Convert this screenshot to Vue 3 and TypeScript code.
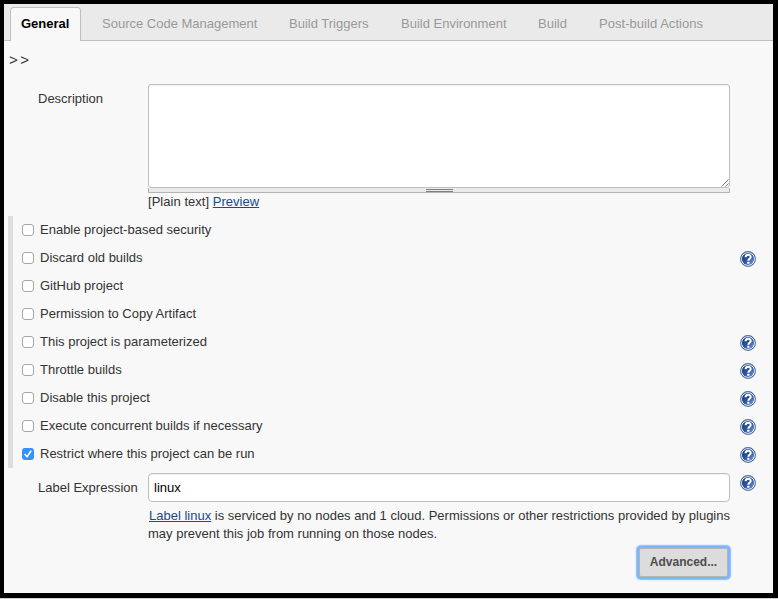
<script setup lang="ts">
import { ref } from 'vue'

interface Tab { label: string; cls: string }
interface Option { label: string; checked: boolean; help: boolean }

const tabs: Tab[] = [
  { label: 'General', cls: 'general' },
  { label: 'Source Code Management', cls: 'scm' },
  { label: 'Build Triggers', cls: 'triggers' },
  { label: 'Build Environment', cls: 'environment' },
  { label: 'Build', cls: 'build' },
  { label: 'Post-build Actions', cls: 'post' },
]
const active = ref('General')

const options = ref<Option[]>([
  { label: 'Enable project-based security', checked: false, help: false },
  { label: 'Discard old builds', checked: false, help: true },
  { label: 'GitHub project', checked: false, help: false },
  { label: 'Permission to Copy Artifact', checked: false, help: false },
  { label: 'This project is parameterized', checked: false, help: true },
  { label: 'Throttle builds', checked: false, help: true },
  { label: 'Disable this project', checked: false, help: true },
  { label: 'Execute concurrent builds if necessary', checked: false, help: true },
  { label: 'Restrict where this project can be run', checked: true, help: true },
])
const description = ref('')
const expression = ref('linux')
</script>

<template>
  <div class="frame">
    <svg class="defs" width="0" height="0" aria-hidden="true">
      <defs>
        <linearGradient id="helpFill" x1="0" y1="0" x2="1" y2="1">
          <stop offset="0" stop-color="#17386f" />
          <stop offset="0.5" stop-color="#2c559a" />
          <stop offset="1" stop-color="#7ba3d6" />
        </linearGradient>
        <symbol id="help" viewBox="0 0 16 16">
          <circle cx="8" cy="8" r="7.4" fill="#fff" stroke="#4c6ca2" stroke-width="1.1" />
          <circle cx="8" cy="8" r="6.1" fill="url(#helpFill)" />
          <path d="M5.6 6.2C5.6 2.9 10.7 2.9 10.7 5.9C10.7 7.8 8.3 7.7 8.3 9.8" fill="none" stroke="#fff" stroke-width="2" />
          <rect x="7.2" y="10.7" width="2.2" height="2" rx="0.5" fill="#fff" />
        </symbol>
      </defs>
    </svg>

    <main class="config">
      <nav class="tabs">
        <a v-for="t in tabs" :key="t.label" class="tab" :class="[t.cls, { active: active === t.label }]" @click="active = t.label">{{ t.label }}</a>
      </nav>

      <div class="crumb">&gt;&gt;</div>

      <section class="field description">
        <label class="name desc-name">Description</label>
        <div class="setting">
          <div class="area">
            <textarea v-model="description"></textarea>
            <svg class="resize" width="8" height="8" viewBox="0 0 8 8"><path d="M0.5 7.5L7.5 0.5M4.5 7.5L7.5 4.5" fill="none" stroke="#555" stroke-width="0.8" /></svg>
          </div>
          <div class="handle"><i class="grip"></i></div>
          <div class="preview"><span class="plain">[Plain text]</span> <a class="link">Preview</a></div>
        </div>
      </section>

      <section class="options">
        <div v-for="o in options" :key="o.label" class="option">
          <label class="check">
            <input v-model="o.checked" type="checkbox" />
            <span class="box" :class="{ on: o.checked }">
              <svg v-if="o.checked" width="12" height="12" viewBox="0 0 12 12"><path d="M3.1 6.4L5.1 8.7L8.8 3.2" fill="none" stroke="#fff" stroke-width="1.6" stroke-linecap="round" stroke-linejoin="round" /></svg>
            </span>
            <span class="text">{{ o.label }}</span>
          </label>
          <svg v-if="o.help" class="help" width="16" height="16"><use href="#help" /></svg>
        </div>
      </section>

      <section class="field expression">
        <label class="name expr-name">Label Expression</label>
        <input v-model="expression" class="entry" type="text" />
        <svg class="help" width="16" height="16"><use href="#help" /></svg>
      </section>

      <div class="message">
        <div><span class="line1"><a class="link">Label linux</a> is serviced by no nodes and 1 cloud. Permissions or other restrictions provided by plugins</span></div>
        <div><span class="line2">may prevent this job from running on those nodes.</span></div>
      </div>

      <div class="actions"><button class="advanced" type="button">Advanced...</button></div>
    </main>
  </div>
</template>

<style>
body { margin: 0; }
</style>

<style scoped>
.frame {
  box-sizing: border-box;
  width: 778px;
  height: 599px;
  padding: 4px 5px 5px 4px;
  background: #000;
  border-bottom: 1px solid #d0d0d0;
  font-family: "Liberation Sans", Arial, sans-serif;
  font-size: 13px;
  line-height: 18px;
  color: #333;
  overflow: hidden;
}
.defs { display: block; width: 0; height: 0; }
.config { height: 589px; background: #f8f8f8; overflow: hidden; white-space: nowrap; }
.tabs {
  box-sizing: border-box;
  display: flex;
  height: 37px;
  padding: 3px 0 0 6px;
  background: #eaeaea;
  border-bottom: 1px solid #bfbfbf;
}
.tab {
  box-sizing: border-box;
  height: 33px;
  padding: 7px 10px 0;
  border: 1px solid transparent;
  border-bottom: 0;
  color: #999;
  margin-right: 10px;
  cursor: pointer;
}
.tab.active {
  height: 34px;
  background: #f8f8f8;
  border-color: #bfbfbf;
  border-radius: 4px 4px 0 0;
  color: #000;
  font-weight: bold;
}
.general { width: 71px; }
.scm { width: 177px; }
.triggers { width: 102px; }
.environment { width: 127px; }
.build { width: 51px; }
.post { letter-spacing: 0.04px; }
.crumb { height: 43px; padding: 9px 0 0 5px; box-sizing: border-box; font-size: 15px; letter-spacing: 2.6px; line-height: 20px; }
.field { display: flex; }
.name { width: 110px; margin-left: 34px; flex: none; }
.desc-name { padding-top: 6px; }
.setting { width: 582px; }
.area { position: relative; height: 104px; }
.area textarea {
  display: block;
  box-sizing: border-box;
  width: 582px;
  height: 104px;
  border: 1px solid #bfbfbf;
  border-radius: 3px;
  background: #fff;
  resize: none;
  outline: none;
  box-shadow: inset 0 1px 1px rgba(0, 0, 0, 0.06);
}
.resize { position: absolute; right: 1px; bottom: 1px; }
.handle {
  box-sizing: border-box;
  height: 5px;
  background: #eaeaea;
  border: solid #b3b5ae;
  border-width: 0 1px 1px;
  display: flex;
  justify-content: center;
  padding: 1px 0 0;
}
.grip { box-sizing: border-box; width: 27px; height: 3px; border: solid #7d7f7c; border-width: 1px 0; }
.preview { height: 23px; }
.plain { letter-spacing: 0.04px; }
.link { color: #204a87; text-decoration: underline; }
.options { margin-left: 4px; width: 759px; border-left: 5px solid #ddd; box-sizing: border-box; }
.option { height: 28px; display: flex; justify-content: space-between; }
.check { display: flex; align-items: flex-start; padding: 8px 0 0 9px; }
.check input { position: absolute; opacity: 0; width: 0; height: 0; margin: 0; }
.box {
  box-sizing: border-box;
  width: 12px;
  height: 12px;
  border: 1px solid #a6a6a6;
  border-radius: 3px;
  background: #fff;
}
.box.on { background: #3591fc; border: 0; }
.box svg { display: block; }
.text { margin: -3px 0 0 6px; }
.help { flex: none; margin: 7px 11px 0 0; }
.expression { padding-top: 5px; height: 38px; box-sizing: border-box; }
.expr-name { padding-top: 6px; }
.entry {
  box-sizing: border-box;
  width: 582px;
  height: 29px;
  padding: 0 5px;
  margin: 0;
  border: 1px solid #bfbfbf;
  border-radius: 4px;
  background: #fff;
  color: #000;
  font: 13px "Liberation Sans", Arial, sans-serif;
  box-shadow: inset 0 1px 1px rgba(0, 0, 0, 0.06);
  outline: none;
}
.expression .help { margin: 2px 0 0 10px; }
.message { margin-left: 144px; height: 42px; padding-top: 1px; box-sizing: border-box; }
.line1 { padding-left: 1px; }
.actions { width: 724px; display: flex; justify-content: flex-end; }
.advanced {
  box-sizing: border-box;
  width: 89px;
  height: 29px;
  padding: 0 0 2px;
  border: 1px solid #b5b5b5;
  border-radius: 2px;
  background: #dcdcdc;
  box-shadow: 0 0 0 2px #7db5f8, 0 0 0 3px #99c5fa, 0 0 1px 4px #e0eefd;
  font: bold 12px "Liberation Sans", Arial, sans-serif;
  color: #4d4d4d;
}
</style>
